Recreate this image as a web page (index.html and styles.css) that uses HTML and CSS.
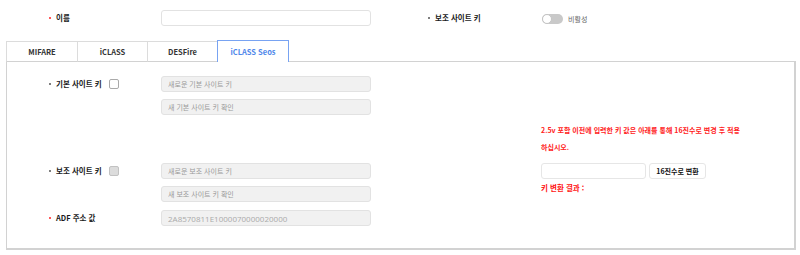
FILE: index.html
```html
<!DOCTYPE html>
<html lang="ko">
<head>
<meta charset="utf-8">
<link rel="stylesheet" href="styles.css">
</head>
<body>
<div class="page">
  <div class="top-row">
    <div class="lbl-cell"><span class="lbl req">이름</span></div>
    <input class="text-input" type="text">
    <div></div>
    <div class="lbl-cell right"><span class="lbl">보조 사이트 키</span></div>
    <div class="toggle-wrap">
      <span class="toggle"><span class="knob"></span></span>
      <span class="toggle-text">비활성</span>
    </div>
  </div>

  <div class="tabs">
    <div class="tab t1">MIFARE</div>
    <div class="tab t2">iCLASS</div>
    <div class="tab t3">DESFire</div>
    <div class="tab active">iCLASS Seos</div>
  </div>

  <div class="panel">
    <div class="p-lbl r1"><span class="lbl">기본 사이트 키</span><span class="chk"></span></div>
    <input class="text-input grey in r1" type="text" placeholder="새로운 기본 사이트 키">
    <input class="text-input grey in r2" type="text" placeholder="새 기본 사이트 키 확인">

    <div class="notice">2.5v 포함 이전에 입력한 키 값은 아래를 통해 16진수로 변경 후 적용<br>하십시오.</div>

    <div class="p-lbl r4"><span class="lbl">보조 사이트 키</span><span class="chk disabled"></span></div>
    <input class="text-input grey in r4" type="text" placeholder="새로운 보조 사이트 키">
    <input class="text-input grey in r5" type="text" placeholder="새 보조 사이트 키 확인">

    <div class="p-lbl r6"><span class="lbl req">ADF 주소 값</span></div>
    <input class="text-input grey in r6 mono" type="text" value="2A8570811E1000070000020000" disabled>

    <div class="convert">
      <div class="convert-row">
        <input class="text-input conv-input" type="text">
        <button class="conv-btn" type="button">16진수로 변환</button>
      </div>
      <div class="result">키 변환 결과 :</div>
    </div>
  </div>
</div>
</body>
</html>
```

FILE: styles.css
```css
* { box-sizing: border-box; }

html, body {
  margin: 0;
  padding: 0;
  background: #fff;
}

body {
  font-family: "Noto Sans CJK KR", "Noto Sans", sans-serif;
  font-size: 7px;
  color: #222;
}

.page {
  padding: 10px 4px 0 6px;
}

/* top row */
.top-row {
  display: grid;
  grid-template-columns: 155px 210px 57px 114px auto;
  align-items: center;
  height: 16px;
}

.lbl-cell {
  padding-left: 43px;
  display: flex;
  align-items: center;
}

.lbl-cell.right { padding-left: 0; }

.lbl {
  display: inline-flex;
  align-items: center;
  font-weight: 700;
  font-size: 7.5px;
  color: #1a1a1a;
  line-height: 10px;
  white-space: nowrap;
}

.lbl::before {
  content: "";
  width: 2px;
  height: 2px;
  border-radius: 50%;
  background: #555;
  margin-right: 5px;
  flex: none;
}

.lbl.req::before { background: #f22; }

.text-input {
  display: block;
  width: 210px;
  height: 16px;
  border: 1px solid #e2e2e2;
  border-radius: 3px;
  background: #fff;
  font-family: inherit;
  font-size: 7px;
  padding: 0 0 0 6px;
  margin: 0;
  outline: none;
  color: #999;
}

.text-input.grey { background: #f1f1f1; }

.text-input::placeholder { color: #999; }

.text-input.mono {
  font-family: "Open Sans", sans-serif;
  font-size: 8px;
  color: #aaa;
}

.toggle-wrap {
  display: flex;
  align-items: center;
  gap: 5px;
  padding-top: 1px;
}

.toggle {
  position: relative;
  width: 21px;
  height: 10px;
  border-radius: 5px;
  background: #c9c9c9;
}

.knob {
  position: absolute;
  left: 0;
  top: 0;
  width: 10px;
  height: 10px;
  border-radius: 50%;
  background: #fff;
  border: 1px solid #c4c4c4;
}

.toggle-text { color: #666; }

/* tabs */
.tabs {
  display: flex;
  align-items: flex-end;
  margin-top: 14px;
  margin-bottom: -1px;
  position: relative;
  z-index: 1;
}

.tab {
  height: 21px;
  border-top: 1px solid #dcdcdc;
  border-left: 1px solid #dcdcdc;
  border-bottom: 1px solid #d2d2d2;
  background: #fff;
  display: flex;
  align-items: center;
  justify-content: center;
  font-weight: 700;
  font-size: 7.5px;
  color: #333;
}

.t1 { width: 71px; }
.t2 { width: 70px; }
.t3 { width: 70px; }

.tab.active {
  width: 72px;
  height: 22px;
  border: 1px solid #78a3f2;
  border-bottom: none;
  color: #4d86ea;
}

/* panel */
.panel {
  border: 1px solid #d2d2d2;
  border-right-width: 2px;
  border-bottom-width: 2px;
  padding: 14px 0 23px 0;
  display: grid;
  grid-template-columns: 154px 210px 170px 1fr;
  grid-template-rows: 16px 16px 34px 16px 16px 16px;
  row-gap: 7px;
}

.panel .r6 { margin-top: 1px; }

.p-lbl {
  grid-column: 1;
  padding-left: 42px;
  display: flex;
  align-items: center;
}

.in { grid-column: 2; }

.r1 { grid-row: 1; }
.r2 { grid-row: 2; }
.r4 { grid-row: 4; }
.r5 { grid-row: 5; }
.r6 { grid-row: 6; }

.chk {
  width: 10px;
  height: 10px;
  border: 1px solid #aaa;
  border-radius: 2px;
  background: #fff;
  margin-left: 7px;
}

.chk.disabled {
  background: #dcdcdc;
  border-color: #c2c2c2;
}

.notice {
  grid-column: 4;
  grid-row: 3;
  color: #f22;
  font-weight: 700;
  line-height: 17px;
  white-space: nowrap;
}

.convert {
  grid-column: 4;
  grid-row: 4 / span 2;
  display: flex;
  flex-direction: column;
}

.convert-row {
  display: flex;
  gap: 3px;
  height: 16px;
}

.conv-input {
  width: 105px;
  border-color: #e6e6e6;
}

.conv-btn {
  width: 57px;
  height: 16px;
  border: 1px solid #e6e6e6;
  border-radius: 3px;
  background: #fff;
  font-family: inherit;
  font-size: 7px;
  font-weight: 700;
  color: #111;
  padding: 0;
  margin: 0;
}

.result {
  color: #f11;
  font-weight: 700;
  font-size: 7.5px;
  line-height: 18px;
}
```
